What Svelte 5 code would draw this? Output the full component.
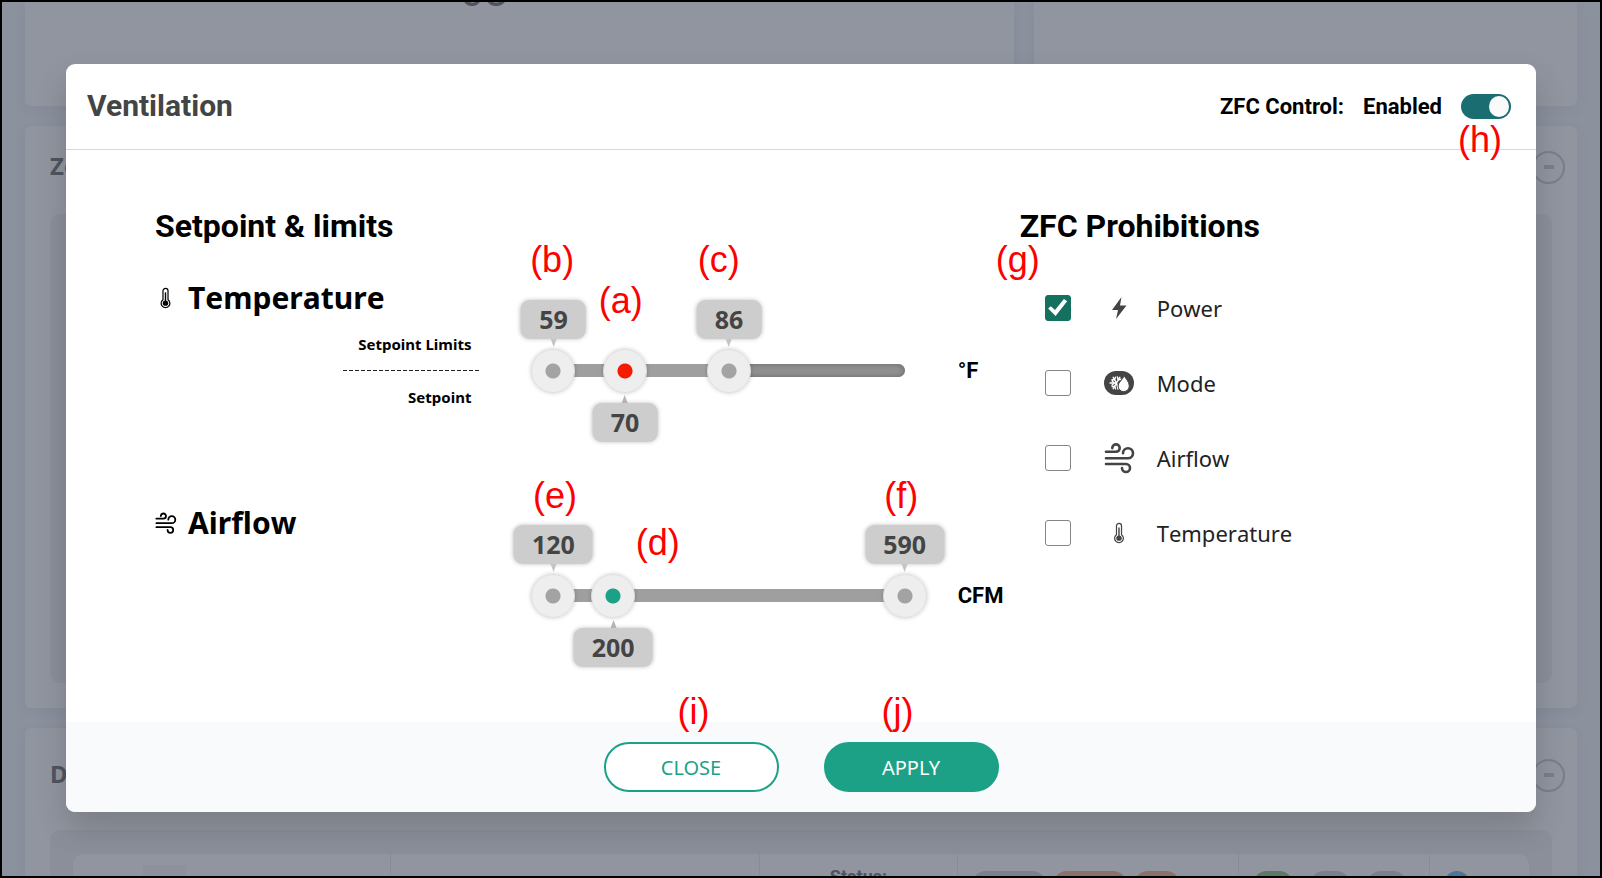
<script lang="ts">
	type Handle = { key: string; label: string; value: number; side: 'top' | 'bottom'; tone: string };
	type Slider = {
		name: string;
		icon: string;
		unit: string;
		min: number;
		max: number;
		legend: boolean;
		handles: Handle[];
	};

	let sliders: Slider[] = $state([
		{
			name: 'Temperature',
			icon: 'thermometer',
			unit: '°F',
			min: 59,
			max: 113,
			legend: true,
			handles: [
				{ key: 'b', label: 'Lower limit', value: 59, side: 'top', tone: 'limit' },
				{ key: 'a', label: 'Setpoint', value: 70, side: 'bottom', tone: 'heat' },
				{ key: 'c', label: 'Upper limit', value: 86, side: 'top', tone: 'limit' }
			]
		},
		{
			name: 'Airflow',
			icon: 'wind',
			unit: 'CFM',
			min: 120,
			max: 590,
			legend: false,
			handles: [
				{ key: 'e', label: 'Lower limit', value: 120, side: 'top', tone: 'limit' },
				{ key: 'd', label: 'Setpoint', value: 200, side: 'bottom', tone: 'air' },
				{ key: 'f', label: 'Upper limit', value: 590, side: 'top', tone: 'limit' }
			]
		}
	]);

	let prohibitions = $state([
		{ name: 'Power', icon: 'bolt', checked: true },
		{ name: 'Mode', icon: 'mode', checked: false },
		{ name: 'Airflow', icon: 'wind', checked: false },
		{ name: 'Temperature', icon: 'thermometer', checked: false }
	]);

	let enabled = $state(true);

	const percent = (slider: Slider, value: number) =>
		((value - slider.min) / (slider.max - slider.min)) * 100;
</script>

{#snippet icon(name: string)}
	<svg
		class="icon {name}"
		viewBox={name === 'thermometer' ? '4 0 22 30' : '0 0 30 30'}
		aria-hidden="true"
	>
		{#if name === 'bolt'}
			<path d="M17.500 4 8 17h6l-2 9 10.500-13.500h-6.500z" fill="currentColor" />
		{:else if name === 'wind'}
			<g fill="none" stroke="currentColor" stroke-width="2.6" stroke-linecap="round">
				<path d="M2 8.800h10a3.700 3.700 0 1 0-3.700-3.700" />
				<path d="M2 15.200h22a5 5 0 1 0-5-5" />
				<path d="M2 21h20a4 4 0 1 1-4 4" />
			</g>
		{:else if name === 'thermometer'}
			<path
				d="M12.300 16.800V7.500a2.700 2.700 0 0 1 5.400 0v9.300a4.700 4.700 0 1 1-5.400 0z"
				fill="none"
				stroke="currentColor"
				stroke-width="1.300"
			/>
			<path d="M15 9v11" stroke="currentColor" stroke-width="1.500" />
			<circle cx="15" cy="20.500" r="2.900" fill="currentColor" />
		{:else}
			<rect x="0" y="3" width="30" height="24" rx="12" fill="currentColor" />
			<g stroke="#fff" stroke-width="1.400" fill="none" stroke-linecap="round">
				<path d="M12.500 15H6M12.500 15 9.200 9.300M12.500 15l3.300-5.700M12.500 15l-3.300 5.700M12.500 15l1.500 6" />
				<path d="M8 12.800 10 15l-2 2.200M8 11.600l2.600.200.900-2.600M13.400 9l.800 2.800 2.700-.600M8.200 18.600l2.600-.300.700 2.600" />
			</g>
			<path
				d="M20 7c.8 3.400 5.300 5.800 5.300 11a5.600 5.600 0 0 1-11.200 0c0-4.200 5.200-6 5.900-11z"
				fill="#fff"
				stroke="currentColor"
			/>
		{/if}
	</svg>
{/snippet}

<div class="page">
	<div class="backdrop" aria-hidden="true">
		<div class="top-row">
			<div class="card"><span class="reading">68</span></div>
			<div class="card"></div>
		</div>
		<div class="card zones">
			<div class="card-head"><span>Zones</span><i class="collapse"></i></div>
			<div class="panel"></div>
		</div>
		<div class="card devices">
			<div class="card-head"><span>Devices</span><i class="collapse"></i></div>
			<div class="panel">
				<div class="table">
					<div class="cell"><i class="thumb"></i></div>
					<div class="cell"></div>
					<div class="cell status">Status:</div>
					<div class="cell chips">
						<i class="chip"></i><i class="chip orange"></i><i class="chip orange small"></i>
					</div>
					<div class="cell chips spaced">
						<i class="chip green"></i><i class="chip"></i><i class="chip"></i>
					</div>
					<div class="cell chips"><i class="dot"></i></div>
				</div>
			</div>
		</div>
	</div>

	<div class="overlay">
		<div class="dialog" role="dialog" aria-labelledby="title">
			<header>
				<h1 id="title">Ventilation</h1>
				<label class="control">
					<span>ZFC Control:</span>
					<span>{enabled ? 'Enabled' : 'Disabled'}</span>
					<span class="anchor">
						<input class="switch" type="checkbox" role="switch" bind:checked={enabled} />
						<b class="mark mark-h">(h)</b>
					</span>
				</label>
			</header>

			<div class="body">
				<section>
					<h2>Setpoint &amp; limits</h2>
					{#each sliders as slider (slider.name)}
						<div class="slider-row">
							<div class="description">
								<h3>{@render icon(slider.icon)}{slider.name}</h3>
								{#if slider.legend}
									<div class="legend">
										<span>Setpoint Limits</span>
										<span>Setpoint</span>
									</div>
								{/if}
							</div>
							<div class="rail">
								<div class="track">
									<div
										class="fill"
										style:width="{percent(slider, slider.handles[2].value)}%"
									></div>
								</div>
								<div class="ranges">
									{#each slider.handles as handle (handle.key)}
										<input
											class={handle.tone}
											type="range"
											aria-label="{slider.name} {handle.label}"
											min={slider.min}
											max={slider.max}
											bind:value={handle.value}
										/>
									{/each}
								</div>
								{#each slider.handles as handle (handle.key)}
									<div
										class="bubble {handle.side}"
										style:left="{percent(slider, handle.value)}%"
									>
										{handle.value}
										<b class="mark mark-{handle.key}">({handle.key})</b>
									</div>
								{/each}
							</div>
							<span class="unit">{slider.unit}</span>
						</div>
					{/each}
				</section>

				<section class="prohibitions">
					<h2>ZFC Prohibitions</h2>
					<b class="mark mark-g">(g)</b>
					<ul>
						{#each prohibitions as item (item.name)}
							<li>
								<label>
									<input class="check" type="checkbox" bind:checked={item.checked} />
									{@render icon(item.icon)}
									<span>{item.name}</span>
								</label>
							</li>
						{/each}
					</ul>
				</section>
			</div>

			<footer>
				<span class="anchor">
					<button type="button">CLOSE</button>
					<b class="mark mark-i">(i)</b>
				</span>
				<span class="anchor">
					<button class="primary" type="button">APPLY</button>
					<b class="mark mark-j">(j)</b>
				</span>
			</footer>
		</div>
	</div>
</div>

<style>
	:global(body) {
		margin: 0;
	}

	.page {
		position: relative;
		box-sizing: border-box;
		min-height: 100vh;
		border: 2px solid #000;
		background: #8b919d;
		overflow: hidden;
		font-family: 'Noto Sans', 'Open Sans', sans-serif;
		font-kerning: none;
		color: #000;
	}

	/* dimmed dashboard */
	.backdrop {
		position: absolute;
		inset: 0;
		padding: 0 23px;
		display: flex;
		flex-direction: column;
		gap: 20px;
		overflow: hidden;
		color: #50545f;
	}
	.card {
		box-sizing: border-box;
		flex: none;
		border-radius: 6px;
		background: #91959f;
		box-shadow: 0 4px 12px rgb(80 90 110 / 8%);
	}
	.top-row {
		display: grid;
		grid-template-columns: 989fr 543fr;
		gap: 20px;
	}
	.top-row .card {
		height: 104px;
		border-radius: 0 0 6px 6px;
	}
	.reading {
		display: block;
		margin: -37px 0 0 434px;
		font: 44px/52px Roboto, sans-serif;
	}
	.zones {
		height: 582px;
	}
	.zones,
	.devices {
		padding: 24px 25px;
	}
	.devices {
		padding-top: 30px;
	}
	.card-head {
		display: flex;
		justify-content: space-between;
		align-items: center;
		margin-right: -13px;
		height: 34px;
		font-size: 24px;
		font-weight: 700;
		line-height: 32px;
	}
	.card-head span {
		padding-bottom: 2px;
	}
	.collapse {
		display: grid;
		place-items: center;
		box-sizing: border-box;
		width: 33px;
		height: 33px;
		border: 2px solid #7a7e89;
		border-radius: 50%;
	}
	.collapse::after {
		content: '';
		width: 10px;
		height: 4px;
		background: #7a7e89;
	}
	.panel {
		margin-top: 30px;
		height: 469px;
		border-radius: 10px;
		background: #8b8f99;
	}
	.devices .panel {
		margin-top: 38px;
		padding: 24px 23px 0;
		height: 60px;
	}
	.table {
		display: grid;
		grid-template-columns: 317fr 369fr 199fr 281fr 191fr 100fr;
		height: 60px;
		border-radius: 10px;
		background: #91959f;
	}
	.cell + .cell {
		border-left: 1px solid #888c98;
	}
	.thumb {
		display: block;
		margin: 11px 0 0 70px;
		width: 43px;
		height: 20px;
		background: #8d919b;
	}
	.status {
		padding-top: 10px;
		text-align: center;
		font: 700 18px/26px Roboto, sans-serif;
	}
	.chips {
		display: flex;
		gap: 7px;
		padding: 17px 14px 0;
	}
	.chips.spaced {
		gap: 17px;
	}
	.chip {
		width: 74px;
		height: 28px;
		border-radius: 14px;
		background: #7c808a;
	}
	.spaced .chip {
		width: 40px;
	}
	.chip.orange {
		background: #8b7268;
	}
	.chip.small {
		width: 46px;
	}
	.chip.green {
		background: #5f7863;
	}
	.dot {
		width: 26px;
		height: 26px;
		border-radius: 50%;
		background: #4c7699;
	}

	/* dialog */
	.overlay {
		position: relative;
		padding: 62px 64px;
	}
	.dialog {
		display: flex;
		flex-direction: column;
		border-radius: 9px;
		background: #fff;
		box-shadow: 0 16px 32px rgb(0 0 0 / 16%);
	}
	header {
		display: flex;
		justify-content: space-between;
		align-items: center;
		height: 85px;
		padding: 0 25px 0 21px;
		border-bottom: 1px solid #d9d9d9;
	}
	h1,
	h2,
	h3,
	ul {
		margin: 0;
		padding: 0;
	}
	h1 {
		padding-bottom: 2px;
		color: #444;
		font: 700 30px/40px Roboto, sans-serif;
	}
	h2 {
		margin-bottom: 12px;
		font: 700 32px/40px Roboto, sans-serif;
	}
	.control {
		display: flex;
		align-items: center;
		gap: 19px;
		font: 700 22px/30px Roboto, sans-serif;
	}
	.anchor {
		position: relative;
		display: flex;
	}
	input {
		appearance: none;
		margin: 0;
		cursor: pointer;
	}
	.switch {
		display: flex;
		width: 50px;
		height: 25px;
		padding: 2px;
		box-sizing: border-box;
		border-radius: 13px;
		background: #1a6e72;
	}
	.switch::after {
		content: '';
		width: 20px;
		height: 21px;
		border-radius: 50%;
		background: #fafafa;
	}
	.switch:checked {
		justify-content: flex-end;
	}

	.body {
		display: grid;
		grid-template-columns: 2fr 1fr;
		gap: 8px;
		padding: 56px 88px 14px 89px;
	}
	.slider-row {
		display: grid;
		grid-template-columns: 1fr 41% 107px;
		align-items: center;
		height: 225px;
	}
	.description {
		display: flex;
		flex-direction: column;
		align-self: stretch;
		padding-top: 20px;
	}
	h3 {
		display: flex;
		align-items: center;
		gap: 12px;
		font-size: 30px;
		line-height: 40px;
	}
	.icon {
		width: 30px;
		height: 30px;
		overflow: visible;
	}
	.thermometer {
		height: 28px;
	}
	h3 .icon {
		width: 21px;
	}
	.legend {
		display: flex;
		flex-direction: column;
		align-self: flex-end;
		gap: 1px;
		margin-right: 72px;
		width: 138px;
		background: repeating-linear-gradient(90deg, #222 0 4px, transparent 4px 6px) 0 52px / 100% 1px
			no-repeat;
		font-size: 15px;
		font-weight: 700;
		line-height: 52px;
		text-align: right;
	}
	.legend span {
		padding-right: 10px;
	}
	.rail {
		position: relative;
		display: grid;
		align-items: center;
	}
	.track,
	.ranges {
		grid-area: 1 / 1;
	}
	.track {
		height: 13px;
		border-radius: 7px;
		background: #929292;
		box-shadow: inset 0 0 6px #666;
		overflow: hidden;
	}
	.fill {
		height: 100%;
		background: #9f9f9f;
	}
	.ranges {
		display: grid;
		margin: 0 -22px;
	}
	.ranges input {
		grid-area: 1 / 1;
		width: 100%;
		height: 44px;
		background: none;
		pointer-events: none;
	}
	.ranges input::-webkit-slider-thumb {
		appearance: none;
		width: 44px;
		height: 44px;
		border: 1px solid #dedede;
		border-radius: 50%;
		background: radial-gradient(circle, var(--dot) 7px, #eee 8px);
		box-shadow: 0 0 4px rgb(0 0 0 / 22%);
		pointer-events: auto;
	}
	.limit {
		--dot: #a3a3a3;
	}
	.heat {
		--dot: #f51b00;
	}
	.air {
		--dot: #1ca187;
	}
	.bubble {
		position: absolute;
		padding: 0 18px;
		border-radius: 9px;
		background: #cdcdcd;
		box-shadow: 0 0 4px rgb(0 0 0 / 24%);
		transform: translateX(-50%);
		color: #444;
		font-size: 25px;
		font-weight: 700;
		line-height: 39px;
	}
	.bubble::after {
		content: '';
		position: absolute;
		left: 50%;
		margin-left: -3px;
		border: 3px solid transparent;
	}
	.top {
		bottom: calc(100% + 10px);
	}
	.top::after {
		top: 100%;
		border-top: 8px solid #c4c4c4;
		border-bottom: 0;
	}
	.bottom {
		top: calc(100% + 10px);
	}
	.bottom::after {
		bottom: 100%;
		border-bottom: 8px solid #b4b4b4;
		border-top: 0;
	}
	.unit {
		padding-left: 53px;
		font: 700 22px/30px Roboto, sans-serif;
	}

	.prohibitions {
		position: relative;
	}
	ul {
		padding: 12px 0 0 25px;
		list-style: none;
	}
	li label {
		display: flex;
		align-items: center;
		height: 75px;
		color: #222;
		font-size: 22px;
		cursor: pointer;
	}
	li .icon {
		margin: 0 23px 0 33px;
		color: #444;
	}
	.check {
		display: grid;
		place-items: center;
		box-sizing: border-box;
		width: 26px;
		height: 26px;
		border: 1px solid #858585;
		border-radius: 3px;
	}
	.check:checked {
		border-color: #14705f;
		background: #14705f;
	}
	.check:checked::after {
		content: '';
		width: 19px;
		height: 17px;
		background: #fff;
		clip-path: polygon(0 56%, 14% 42%, 36% 65%, 83% 0, 100% 13%, 39% 100%);
	}

	footer {
		display: flex;
		justify-content: center;
		align-items: center;
		gap: 45px;
		height: 90px;
		border-radius: 0 0 9px 9px;
		background: #f8fafc;
	}
	button {
		width: 175px;
		height: 50px;
		border: 2px solid #1ca187;
		border-radius: 25px;
		background: #fff;
		color: #1ca187;
		font-family: inherit;
		font-size: 20px;
		cursor: pointer;
	}
	.primary {
		background: #1ca187;
		color: #fff;
	}

	/* red call-outs drawn over the controls */
	.mark {
		position: absolute;
		color: #f00;
		font: 400 36px/40px 'Liberation Sans', Arial, sans-serif;
		pointer-events: none;
	}
	.mark-h {
		top: 26px;
		left: -3px;
	}
	.mark-b,
	.mark-c {
		bottom: 59px;
		left: 9px;
	}
	.mark-c {
		left: 1px;
	}
	.mark-e,
	.mark-f {
		bottom: 48px;
		left: 19px;
	}
	.mark-a {
		bottom: 121px;
		left: 6px;
	}
	.mark-d {
		bottom: 104px;
		left: 62px;
	}
	.mark-g {
		top: 34px;
		left: -24px;
	}
	.mark-i,
	.mark-j {
		top: -50px;
		left: 74px;
	}
	.mark-j {
		left: 58px;
	}
</style>
